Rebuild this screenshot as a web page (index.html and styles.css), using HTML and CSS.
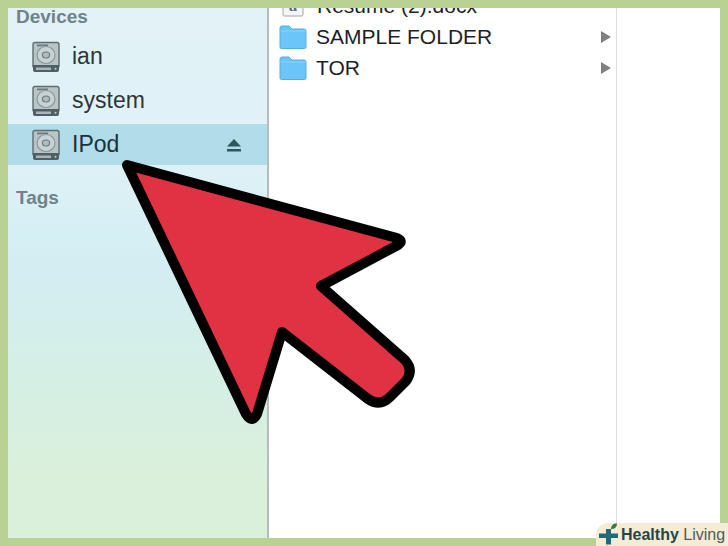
FILE: index.html
```html
<!DOCTYPE html>
<html lang="en">
<head>
  <meta charset="UTF-8">
  <title>IPod in Finder</title>
  <link rel="stylesheet" href="styles.css">
</head>
<body>
  <svg width="0" height="0" class="defs">
    <symbol id="disk" viewBox="0 0 28 32">
      <path d="M3 1.500h22a2 2 0 0 1 2 2v22H1v-22a2 2 0 0 1 2-2z" fill="#b9c4c6" stroke="#5d6c70" stroke-width="1.400"/>
      <rect x="5" y="3.500" width="11" height="1.800" fill="#6b7a7e"/>
      <ellipse cx="14" cy="14" rx="9" ry="8.500" fill="#c8d2d4" stroke="#8a989b" stroke-width="1.200"/>
      <ellipse cx="14" cy="14" rx="3.600" ry="3" fill="#b0bcbf" stroke="#6b7a7e" stroke-width="1.200"/>
      <path d="M1 24h26v5a2 2 0 0 1-2 2H3a2 2 0 0 1-2-2z" fill="#4f5f63"/>
      <path d="M4 26.500h15v2.500H4z" fill="#aab5b8"/>
      <circle cx="23.500" cy="27.800" r="1" fill="#c3cccf"/>
    </symbol>
    <symbol id="folder" viewBox="0 0 28 24">
      <path d="M1 3a2 2 0 0 1 2-2h7l3 3h12a2 2 0 0 1 2 2v16a1.500 1.500 0 0 1-1.500 1.500h-23A1.500 1.500 0 0 1 1 22z" fill="#6cc5f7" stroke="#55aee0"/>
      <path d="M1.500 6h25" stroke="#8ad3fa"/>
    </symbol>
  </svg>

  <div class="frame">
    <aside class="sidebar">
      <h2 class="side-title first">Devices</h2>
      <div class="device"><svg class="disk"><use href="#disk"/></svg><span>ian</span></div>
      <div class="device"><svg class="disk"><use href="#disk"/></svg><span>system</span></div>
      <div class="device active">
        <svg class="disk"><use href="#disk"/></svg><span>IPod</span>
        <svg class="eject" viewBox="0 0 16 14"><path d="M8 1l7 7.500H1z"/><rect x="1" y="11" width="14" height="2.500"/></svg>
      </div>
      <h2 class="side-title tags">Tags</h2>
    </aside>

    <main class="files">
      <div class="file">
        <svg class="doc" viewBox="0 0 24 24"><rect x="2" y="-6" width="20" height="28" rx="1.500" fill="#f4f6f8" stroke="#9aa5ad"/><text x="12" y="17" text-anchor="middle" class="doc-letter">a</text></svg>
        <span>Resume (2).docx</span>
      </div>
      <div class="file"><svg class="folder"><use href="#folder"/></svg><span>SAMPLE FOLDER</span><i class="caret"></i></div>
      <div class="file"><svg class="folder"><use href="#folder"/></svg><span>TOR</span><i class="caret"></i></div>
    </main>

    <div class="preview"></div>
  </div>

  <svg class="arrow" viewBox="0 0 728 546">
    <path d="M127 165L397 238Q404 241 398 245L321 286L405 360Q414 370 406 381L390 397Q380 407 368 399L282 332L257 414Q252 424 246 414Z"/>
  </svg>

  <div class="badge">
    <svg class="badge-logo" viewBox="0 0 20 22">
      <path d="M7 6h5v4.500h7v4.500h-7v6.500H7V15H0v-4.500h7z" fill="#1f6c78"/>
      <path d="M12 6c0-3.500 2-5.500 6-5.500 0 3.500-2 5.500-6 5.500z" fill="#3d7a3a"/>
    </svg>
    <span class="brand"><b>Healthy</b> Living</span>
  </div>
</body>
</html>
```

FILE: styles.css
```css
html, body {
  margin: 0;
  height: 100%;
}
body {
  position: relative;
  width: 728px;
  height: 546px;
  overflow: hidden;
  background-color: #b9d193;
  font-family: "Liberation Sans", Arial, sans-serif;
}
.defs {
  position: absolute;
}
.frame {
  display: flex;
  height: 530px;
  margin: 8px;
  overflow: hidden;
  background-color: white;
}

/* sidebar */
.sidebar {
  width: 259px;
  flex-shrink: 0;
  border-right: 2px solid #b4bcbc;
  background: linear-gradient(180deg, #e2f2f7 0%, #e0f2f7 25%, #d2eef2 50%, #d6efe4 72%, #daf0da 90%);
}
.side-title {
  margin: 0;
  padding-left: 8px;
  height: 18px;
  line-height: 18px;
  font-size: 19px;
  font-weight: bold;
  color: #6f8388;
}
.side-title.first {
  margin-bottom: 10px;
}
.tags {
  margin-top: 24px;
}
.device {
  display: flex;
  align-items: center;
  height: 41px;
  margin-top: 3px;
  padding: 0 25px 0 24px;
  font-size: 23px;
  color: #2c3638;
}
.device span {
  margin-left: 12px;
  flex: 1;
}
.device.active {
  background-color: #b0dde8;
  color: #1c323a;
}
.disk {
  width: 28px;
  height: 32px;
}
.eject {
  width: 16px;
  height: 14px;
  fill: #2f5560;
}

/* file column */
.files {
  width: 347px;
  flex-shrink: 0;
  margin-top: -18px;
  border-right: 1px solid #d8dcdc;
}
.file {
  display: flex;
  align-items: center;
  height: 31px;
  padding: 0 4px 0 10px;
  font-size: 21px;
  color: #1c1f26;
}
.file span {
  margin-left: 9px;
  flex: 1;
}
.folder {
  width: 28px;
  height: 24px;
}
.doc {
  width: 24px;
  height: 24px;
  margin: 0 3px 0 2px;
}
.doc-letter {
  font-family: "Liberation Serif", serif;
  font-size: 17px;
  font-weight: bold;
  fill: #54708a;
}
.caret {
  width: 0;
  height: 0;
  margin-right: 1px;
  border-left: 10px solid #808080;
  border-top: 6px solid transparent;
  border-bottom: 6px solid transparent;
}
.preview {
  flex: 1;
}

/* overlays */
.arrow {
  position: absolute;
  left: 0;
  top: 0;
  width: 728px;
  height: 546px;
}
.arrow path {
  fill: #e03242;
  stroke: #000;
  stroke-width: 10;
  stroke-linejoin: round;
}
.badge {
  position: absolute;
  right: 0;
  bottom: 0;
  display: flex;
  align-items: center;
  width: 132px;
  height: 23px;
  border-top-left-radius: 12px;
  background-color: #f4ecd4;
}
.badge-logo {
  flex-shrink: 0;
  width: 20px;
  height: 22px;
  margin: -2px 2px 0 3px;
}
.brand {
  font-size: 16px;
  color: #4f5a58;
  white-space: nowrap;
}
.brand b {
  color: #23464c;
}
```
